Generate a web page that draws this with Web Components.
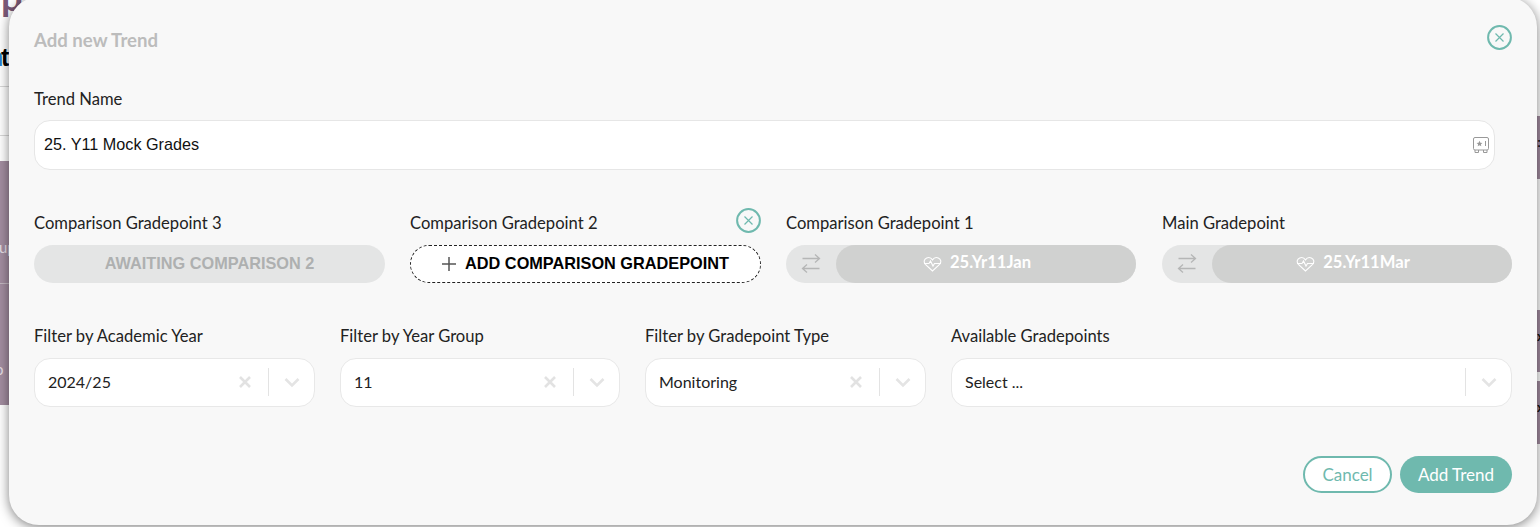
<!DOCTYPE html>
<html><head><meta charset="utf-8"><style>
html,body{margin:0;padding:0;width:1540px;height:527px;overflow:hidden;background:#fff;font-family:"Noto Sans",sans-serif}
</style></head><body>
<template id="t-bg"><style>
:host{display:block;position:absolute;inset:0;overflow:hidden;background:#fff;font-family:"Liberation Sans",sans-serif}
.b{position:absolute;background:#a38da0}
.line{position:absolute;height:1px;background:#d8d8d8;left:0;width:20px}
.p{position:absolute;left:1px;top:-26px;font:700 38px/1.200 "Lato",sans-serif;color:#7a5a78}
.t{position:absolute;left:1px;top:43px;font:700 25px/1.150 "Liberation Sans",sans-serif;color:#000}
.n{position:absolute;left:-12px;top:43px;font:700 25px/1.150 "Liberation Sans",sans-serif;color:#2a7fd0}
.s{position:absolute;font:15px/1.200 "Lato",sans-serif;color:#e6dfe5}
.k{position:absolute;left:1537px;font:700 12px/1.200 "Liberation Sans",sans-serif;color:#111}
</style>
<div class="p">p</div><div class="n">n</div><div class="t">t</div>
<div class="line" style="top:86px"></div><div class="line" style="top:135px"></div>
<div class="b" style="left:0;top:161px;width:20px;height:244px"></div>
<div class="s" style="left:-1px;top:238px">up</div><div class="s" style="left:-5px;top:360px">o</div>
<div class="line" style="top:283px;background:#c4b8c2"></div>
<div class="b" style="left:1520px;top:116px;width:20px;height:63px"></div>
<div class="b" style="left:1520px;top:310px;width:20px;height:62px"></div>
<div class="b" style="left:1520px;top:381px;width:20px;height:63px"></div>
<div class="k" style="top:136px">:</div><div class="k" style="top:330px">x</div><div class="k" style="top:401px">x</div>
</template>
<template id="t-dialog"><style>
:host{display:block;position:absolute;left:9px;top:-3px;width:1528px;height:528px;box-sizing:border-box;background:#f8f8f8;border-radius:30px;box-shadow:0 2px 12px rgba(0,0,0,.5);padding:34px 0 0 25px;font-family:"Lato",sans-serif;color:#222}
.head{display:flex;justify-content:space-between;height:58px;align-items:flex-start;width:1478px}
h2{margin:0;font:700 18.600px/1 "Lato",sans-serif;color:#bcbcbc}
.row{display:grid;column-gap:25px;width:1478px}
.r1{grid-template-columns:351px 351px 351px 350px;margin-top:43px}
.r2{margin-top:43px;grid-template-columns:281px 280px 281px 561px}
.foot{display:flex;justify-content:flex-end;gap:8px;margin-top:49px;width:1478px}
</style>
<div class="head"><h2>Add new Trend</h2><x-close style="margin-top:-6px"></x-close></div>
<x-field label="Trend Name"><x-textbox style="margin-top:-1px">25. Y11 Mock Grades</x-textbox></x-field>
<div class="row r1">
<x-field label="Comparison Gradepoint 3"><x-pill kind="await">AWAITING COMPARISON 2</x-pill></x-field>
<x-field label="Comparison Gradepoint 2" closable><x-pill kind="add">ADD COMPARISON GRADEPOINT</x-pill></x-field>
<x-field label="Comparison Gradepoint 1"><x-pill kind="grade" style="margin-right:1px">25.Yr11Jan</x-pill></x-field>
<x-field label="Main Gradepoint"><x-pill kind="grade">25.Yr11Mar</x-pill></x-field>
</div>
<div class="row r2">
<x-field label="Filter by Academic Year"><x-select clear>2024/25</x-select></x-field>
<x-field label="Filter by Year Group"><x-select clear>11</x-select></x-field>
<x-field label="Filter by Gradepoint Type"><x-select clear>Monitoring</x-select></x-field>
<x-field label="Available Gradepoints"><x-select>Select ...</x-select></x-field>
</div>
<div class="foot"><x-btn kind="o">Cancel</x-btn><x-btn kind="f">Add Trend</x-btn></div>
</template>
<template id="t-close"><style>
:host{display:block;width:25px;height:25px}
svg{display:block}
</style><svg width="25" height="25" viewBox="0 0 25 25" fill="none"><circle cx="12.500" cy="12.500" r="11.400" stroke="#6fb9ae" stroke-width="2"/><path d="M8.500 8.500l8 8M16.500 8.500l-8 8" stroke="#6fb9ae" stroke-width="1.200"/></svg></template>
<template id="t-field"><style>
:host{display:block;position:relative}
.lab{font-size:16.600px;line-height:20px;height:20px;margin-bottom:12px;color:#222;white-space:nowrap}
x-close{position:absolute;right:0;top:-5px}
</style><div class="lab"></div><slot></slot></template>
<template id="t-textbox"><style>
:host{display:flex;align-items:center;box-sizing:border-box;width:1461px;height:50px;background:#fff;border:1px solid #e6e6e6;border-radius:16px;padding:0 5px 0 9px;font:16.200px "Liberation Sans",sans-serif;color:#111}
span{flex:1;padding-bottom:2px}svg{display:block}
</style><span><slot></slot></span><svg width="18" height="18" viewBox="0 0 18 18" fill="none" stroke="#999" stroke-width="1"><rect x="2.500" y="1.500" width="15" height="12.500" rx="1.500"/><path d="M4 14v2.500h3.500V14M12.500 14v2.500H16V14"/><path d="M8.500 4.800l.9 1.900 2 .2-1.500 1.400.4 2-1.800-1-1.800 1 .4-2-1.500-1.400 2-.2z" fill="#999" stroke="none"/><path d="M14.500 5v5"/></svg></template>
<template id="t-pill"><style>
:host{display:block;box-sizing:border-box;height:38px;border-radius:19px;position:relative}
.a{height:100%;display:flex;align-items:center;justify-content:center;background:#e4e5e5;border-radius:19px;font:700 16.300px "Liberation Sans",sans-serif;color:#aeb0b0;box-sizing:border-box;padding-bottom:2px}
.d{height:100%;display:flex;align-items:center;justify-content:center;gap:9px;background:#fff;border:1px dashed #222;border-radius:19px;font:700 16.300px "Liberation Sans",sans-serif;color:#000;box-sizing:border-box}
.d span{padding-bottom:2px}
.g{height:100%;display:flex;background:#e4e5e5;border-radius:19px}
.sw{width:50px;display:flex;align-items:center;justify-content:center}
.m{flex:1;display:flex;align-items:center;justify-content:center;gap:8px;background:#d0d1d0;border-radius:19px;color:#fff;font:700 16.600px "Lato",sans-serif;padding-right:18px}
.m span{padding-bottom:4px;line-height:20px}
svg{display:block}
</style><div id="c"></div></template>
<template id="t-select"><style>
:host{display:flex;align-items:center;box-sizing:border-box;height:49px;background:#fff;border:1px solid #e8e8e8;border-radius:16px;padding:0 13px 1px 13px;font-size:16px;color:#222}
.v{flex:1;padding-bottom:2px}
.x{margin-right:16px}
.sep{width:1px;height:28px;background:#e3e3e3;margin-right:14px}
svg{display:block}
</style><span class="v"><slot></slot></span><svg class="x" width="14" height="14" viewBox="0 0 14 14" stroke="#e2e2e2" stroke-width="2.600" fill="none"><path d="M2 2l10 10M12 2L2 12"/></svg><div class="sep"></div><svg width="18" height="14" viewBox="0 0 18 14" stroke="#e4e4e4" stroke-width="2.600" fill="none"><path d="M2.500 4l6.500 6.500L15.500 4"/></svg></template>
<template id="t-btn"><style>
:host{display:flex;align-items:center;justify-content:center;box-sizing:border-box;height:37px;border-radius:19px;font-size:17px}
:host([kind=o]){width:89px;background:#fff;border:2px solid #6fb9ae;color:#6fb9ae}
:host([kind=f]){width:112px;background:#6fb9ae;color:#fff}
</style><slot></slot></template>
<x-bg></x-bg><x-dialog></x-dialog>
<script>
function mk(name,tid,init){customElements.define(name,class extends HTMLElement{constructor(){super();const s=this.attachShadow({mode:'open'});s.appendChild(document.getElementById(tid).content.cloneNode(true));}connectedCallback(){init&&init.call(this,this.shadowRoot)}})}
const swap='<svg width="22" height="22" viewBox="0 0 22 22" fill="none" stroke="#b5b6b6" stroke-width="1.300"><path d="M2.500 5.500h17M15 1.500l4.500 4-4.500 4M19.500 15.500h-17M7 11.500l-4.500 4 4.500 4"/></svg>';
const heart='<svg width="19" height="16" viewBox="0 0 19 16" fill="none" stroke="#fff" stroke-width="1.100"><path d="M9.500 15L2.400 8.300C.4 6.200 1 2.900 3.700 1.900 5.800 1.200 8.300 2 9.500 3.900 10.700 2 13.200 1.200 15.300 1.900 18 2.900 18.600 6.200 16.600 8.300z"/><path d="M1 7.500H6L7.500 5l2.500 5 1.500-2.500H18"/></svg>';
mk('x-bg','t-bg');mk('x-dialog','t-dialog');mk('x-close','t-close');
mk('x-field','t-field',function(s){s.querySelector('.lab').textContent=this.getAttribute('label');if(this.hasAttribute('closable')){s.appendChild(document.createElement('x-close'))}});
mk('x-textbox','t-textbox');
mk('x-pill','t-pill',function(s){const k=this.getAttribute('kind'),c=s.getElementById('c'),t=this.textContent;c.style.height='100%';
if(k=='await')c.innerHTML='<div class="a">'+t+'</div>';
if(k=='add')c.innerHTML='<div class="d"><svg width="14" height="14" viewBox="0 0 14 14" stroke="#555" stroke-width="1.500"><path d="M7 0v14M0 7h14"/></svg><span>'+t+'</span></div>';
if(k=='grade')c.innerHTML='<div class="g"><div class="sw">'+swap+'</div><div class="m">'+heart+'<span>'+t+'</span></div></div>';});
mk('x-select','t-select',function(s){if(!this.hasAttribute('clear'))s.querySelector('.x').style.display='none'});
mk('x-btn','t-btn');
</script>
</body></html>
